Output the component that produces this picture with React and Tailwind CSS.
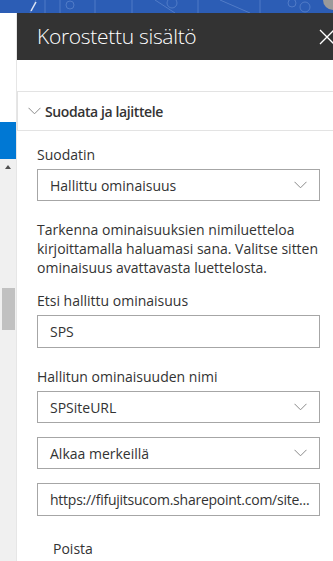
import React from "react";

const font = { fontFamily: '"Segoe UI", "Open Sans", "Noto Sans", sans-serif' };

function Chevron({ className = "" }) {
  return (
    <svg className={className} width="13" height="8" viewBox="0 0 13 8" fill="none">
      <path d="M0.5 0.8 L6.5 6.8 L12.5 0.8" stroke="#8a8a8a" strokeWidth="1" />
    </svg>
  );
}

function Dropdown({ text }) {
  return (
    <div className="h-[32px] border border-[#a6a6a6] flex items-center justify-between pl-[12px] pr-[12px] text-[14px] text-[#333]">
      <span>{text}</span>
      <Chevron />
    </div>
  );
}

function Input({ text, tight }) {
  return (
    <div className={"h-[33px] border border-[#a6a6a6] flex items-center pl-[12px] pr-[8px] text-[14px] text-[#333] whitespace-nowrap overflow-hidden " + (tight ? "tracking-[-0.25px]" : "")}>
      {text}
    </div>
  );
}

export default function App() {
  return (
    <div className="w-[333px] h-[561px] overflow-hidden bg-white flex flex-col" style={font}>
      {/* banner */}
      <div className="h-[13px] bg-[#2c5db5] relative overflow-hidden shrink-0">
        <svg width="333" height="13" className="absolute inset-0">
          <g stroke="#6f93d6" strokeWidth="0.7" fill="none" opacity="0.8">
            <line x1="30" y1="13" x2="36" y2="0" />
            <line x1="45" y1="0" x2="45" y2="13" />
            <line x1="60" y1="0" x2="60" y2="13" />
            <circle cx="70" cy="5" r="4" />
            <line x1="95" y1="0" x2="95" y2="13" />
            <line x1="132" y1="0" x2="132" y2="13" />
            <line x1="155" y1="0" x2="175" y2="13" />
            <circle cx="172" cy="3" r="5" />
            <line x1="198" y1="0" x2="198" y2="13" />
            <line x1="220" y1="0" x2="250" y2="13" />
            <line x1="260" y1="0" x2="260" y2="13" />
            <circle cx="292" cy="3" r="4" />
            <circle cx="305" cy="7" r="5" />
          </g>
          <line x1="31" y1="11" x2="36" y2="2" stroke="#dfe7f5" strokeWidth="1.5" />
          <circle cx="333" cy="0" r="10" fill="#9a9a9a" />
        </svg>
      </div>
      <div className="flex flex-1 min-h-0">
        {/* left strip */}
        <div className="w-[17px] shrink-0 flex flex-col border-r border-[#e6e6e6]">
          <div className="h-[109px] bg-white" />
          <div className="h-[37px] bg-[#0078d4]" />
          <div className="flex-1 bg-[#f0f0f0] flex flex-col items-center">
            <div className="mt-[6px] w-0 h-0 border-l-[3.5px] border-r-[3.5px] border-b-[4px] border-l-transparent border-r-transparent border-b-[#505050]" />
            <div className="mt-[119px] w-[13px] h-[42px] bg-[#c1c1c1]" />
          </div>
        </div>
        {/* panel */}
        <div className="flex-1 flex flex-col min-w-0">
          <div className="h-[47px] bg-[#333333] flex items-center justify-between pl-[20px] shrink-0">
            <span className="text-[21px] font-light text-white tracking-[-0.3px]">Korostettu sisältö</span>
            <svg width="16" height="16" viewBox="0 0 16 16" className="mr-[-2px]">
              <path d="M1 1 L15 15 M15 1 L1 15" stroke="white" strokeWidth="1.3" />
            </svg>
          </div>
          <div className="h-[31px]" />
          <div className="h-[40px] border-t border-b border-l border-[#e3e3e3] flex items-center pl-[10px] shrink-0">
            <Chevron className="mr-[4px]" />
            <span className="text-[14px] font-semibold text-[#333] tracking-[-0.4px]">Suodata ja lajittele</span>
          </div>
          <div className="pl-[20px] pr-[13px] flex flex-col">
            <div className="mt-[14px] text-[14px] text-[#333] leading-[20px]">Suodatin</div>
            <div className="mt-[4px]"><Dropdown text="Hallittu ominaisuus" /></div>
            <div className="mt-[19px] text-[14px] text-[#333] leading-[19px]">
              Tarkenna ominaisuuksien nimiluetteloa kirjoittamalla haluamasi sana. Valitse sitten ominaisuus avattavasta luettelosta.
            </div>
            <div className="mt-[14px] text-[14px] text-[#333] leading-[20px]">Etsi hallittu ominaisuus</div>
            <div className="mt-[4px]"><Input text="SPS" /></div>
            <div className="mt-[19px] text-[14px] text-[#333] leading-[20px]">Hallitun ominaisuuden nimi</div>
            <div className="mt-[4px]"><Dropdown text="SPSiteURL" /></div>
            <div className="mt-[14px]"><Dropdown text="Alkaa merkeillä" /></div>
            <div className="mt-[14px]"><Input tight text="https://fifujitsucom.sharepoint.com/site..." /></div>
            <div className="mt-[22px] pl-[16px] text-[14px] text-[#333]">Poista</div>
          </div>
        </div>
      </div>
    </div>
  );
}
